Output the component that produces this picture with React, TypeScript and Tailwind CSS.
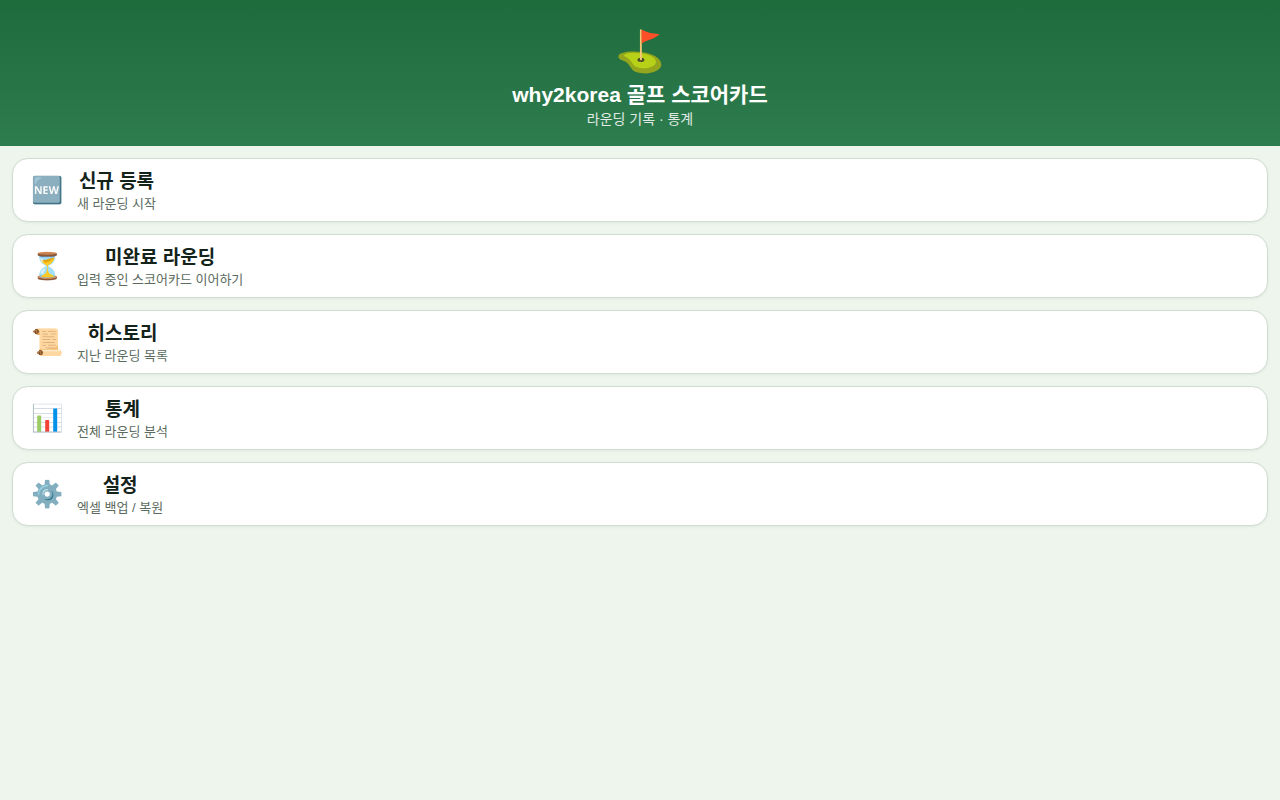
const menuItems = [
  { icon: "🆕", title: "신규 등록", desc: "새 라운딩 시작" },
  { icon: "⏳", title: "미완료 라운딩", desc: "입력 중인 스코어카드 이어하기" },
  { icon: "📜", title: "히스토리", desc: "지난 라운딩 목록" },
  { icon: "📊", title: "통계", desc: "전체 라운딩 분석" },
  { icon: "⚙️", title: "설정", desc: "엑셀 백업 / 복원" },
];

export default function App() {
  return (
    <div className="min-h-screen bg-[#edf5ed] font-['Liberation_Sans','Noto_Sans_CJK_KR',sans-serif] text-[#14231a]">
      {/* Header */}
      <header className="bg-linear-to-b from-[#1e6b3c] to-[#2e7d4f] px-4 pt-6 pb-[18px] text-center text-white">
        <div className="font-['Noto_Color_Emoji',sans-serif] text-[40px] leading-[56px]">⛳</div>
        <h1 className="mt-0.5 text-[21px] leading-[26px] font-bold">why2korea 골프 스코어카드</h1>
        <p className="mt-0.5 text-sm leading-[18px] opacity-85">라운딩 기록 · 통계</p>
      </header>

      {/* Main menu */}
      <main className="flex flex-col gap-3 p-3">
        {menuItems.map((item) => (
          <button
            key={item.title}
            type="button"
            className="flex min-h-16 w-full items-center gap-3.5 rounded-2xl border border-[#d0ddd2] bg-white px-[18px] shadow-[0_1px_3px_rgba(0,0,0,0.06)]"
          >
            <span className="w-8 text-center font-['Noto_Color_Emoji',sans-serif] text-[26px] leading-8">{item.icon}</span>
            <span className="text-center">
              <span className="block text-[19px] leading-7 font-bold">{item.title}</span>
              <span className="block text-[13px] leading-4 text-[#5b6b60]">{item.desc}</span>
            </span>
          </button>
        ))}
      </main>
    </div>
  );
}
